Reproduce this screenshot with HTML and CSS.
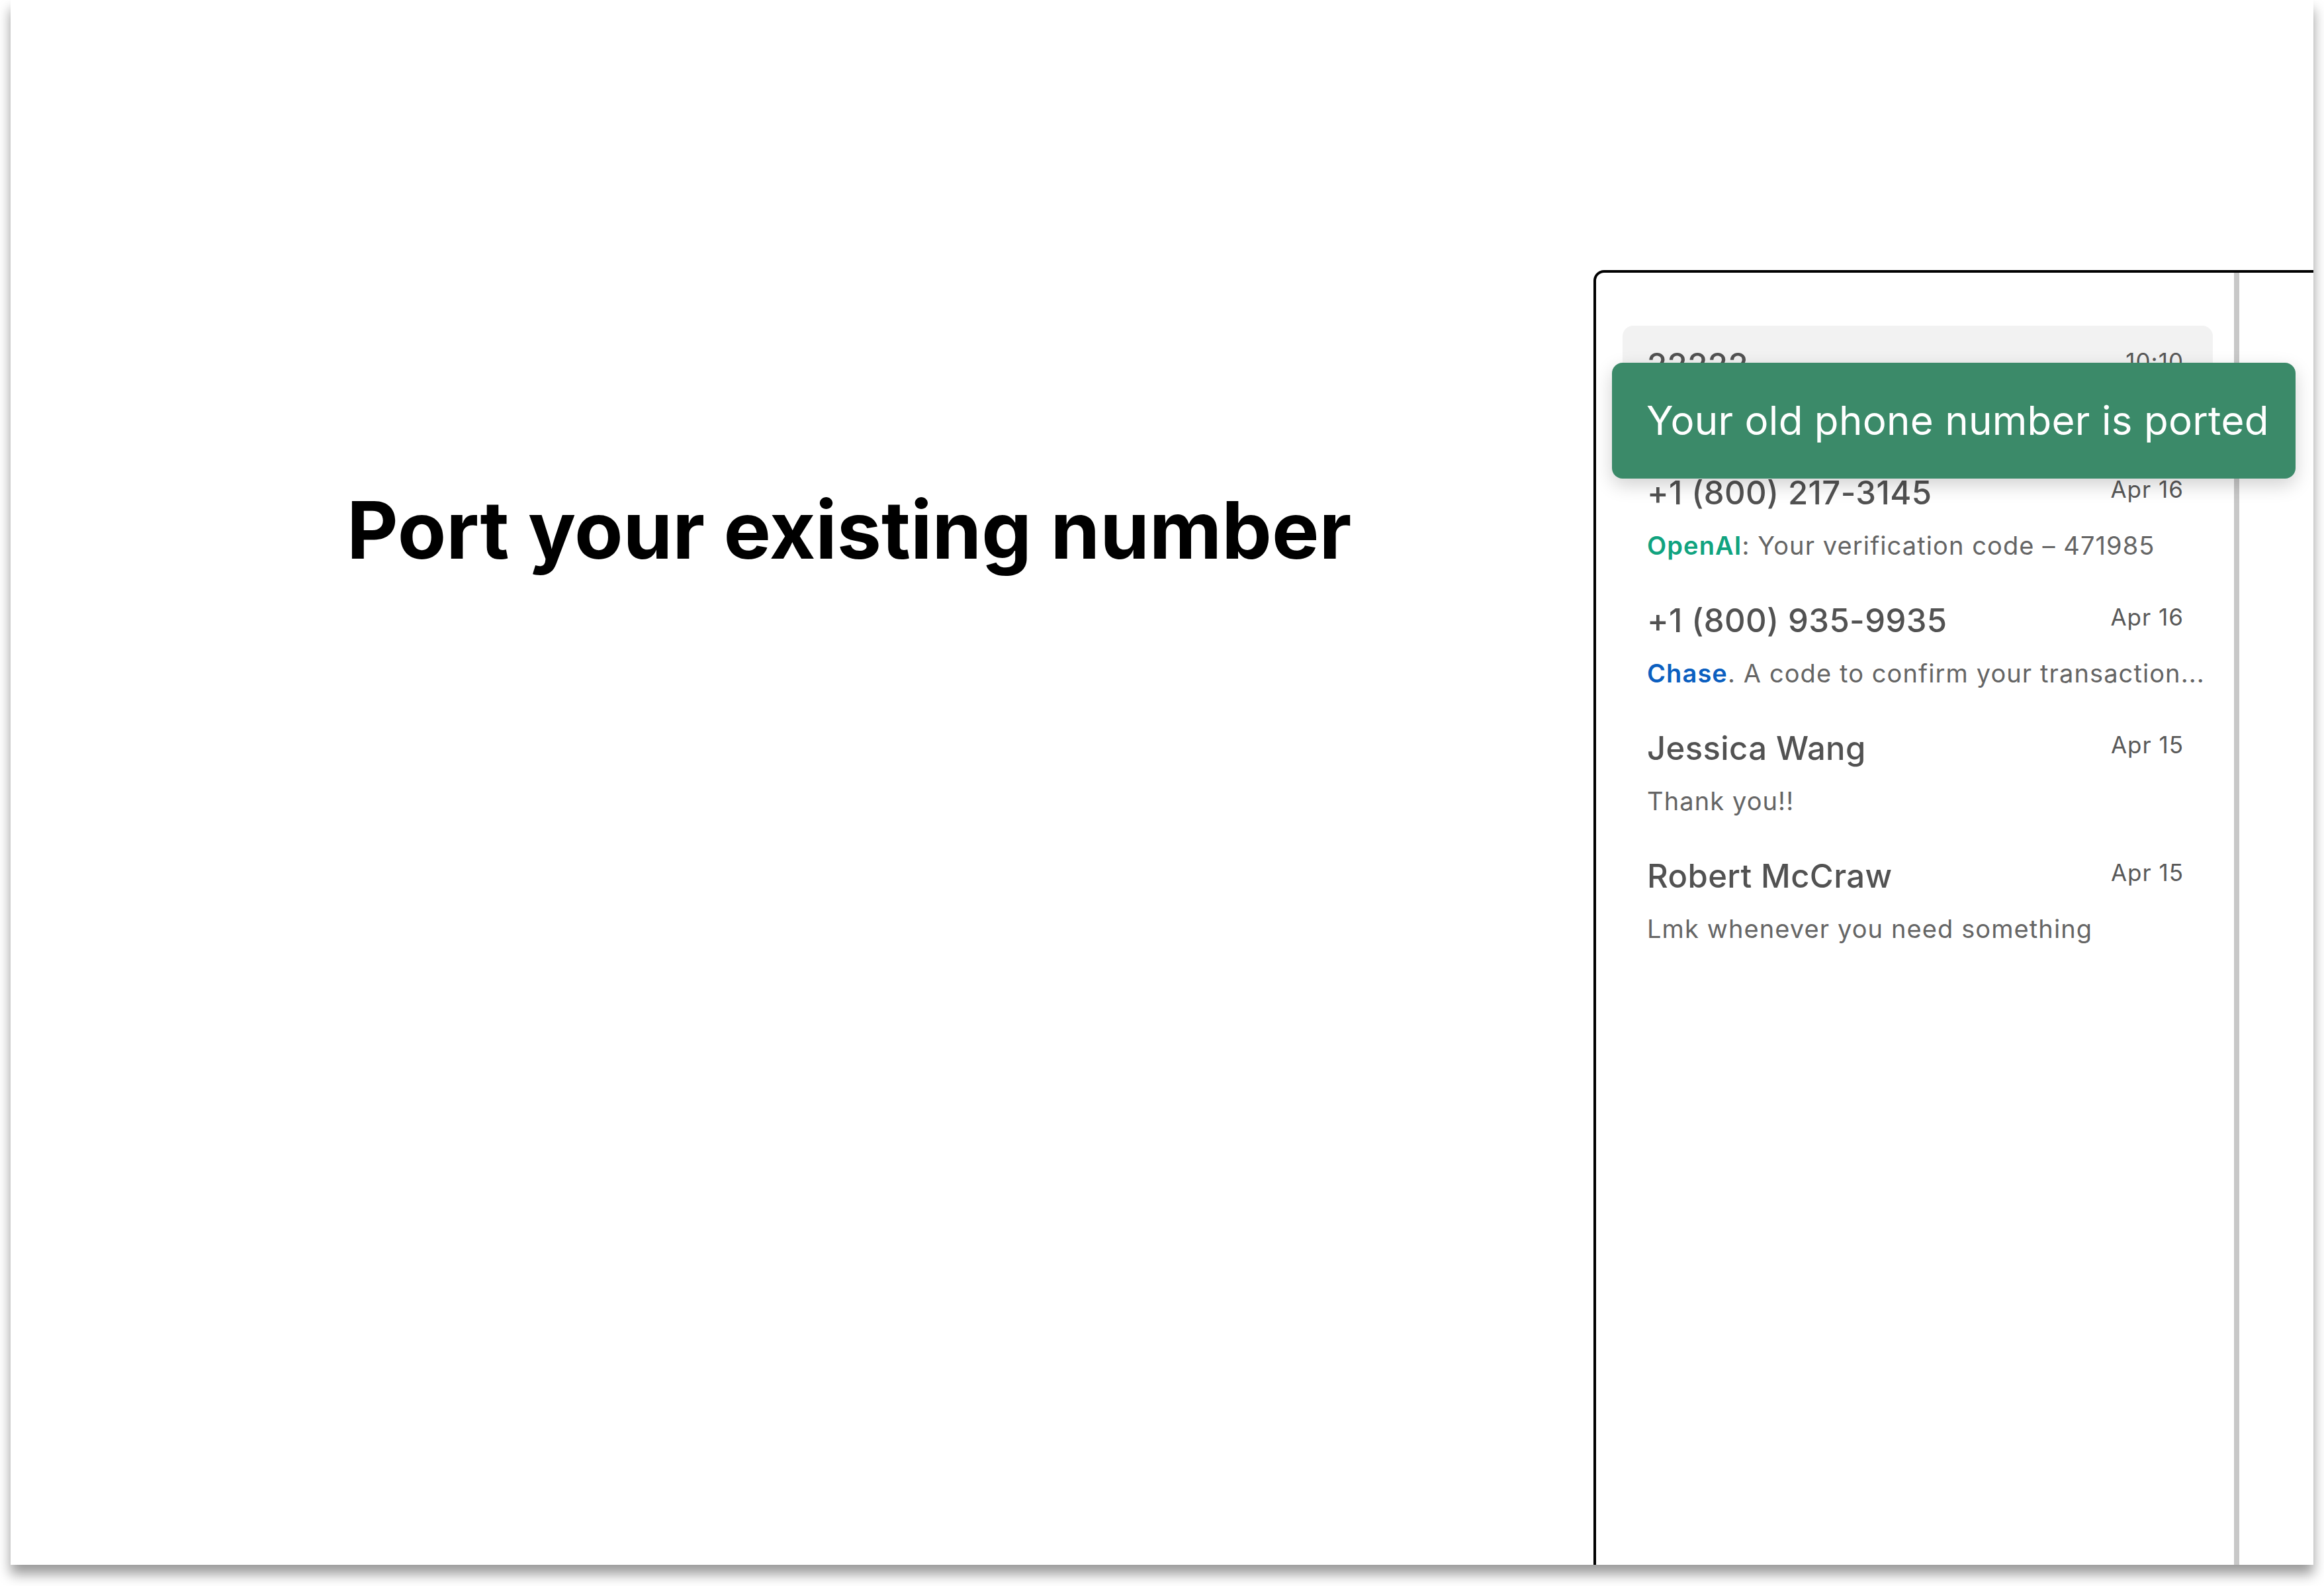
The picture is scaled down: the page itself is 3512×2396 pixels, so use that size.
FILE: index.html
```html
<!DOCTYPE html>
<html lang="en">
<head>
    <meta charset="UTF-8">
    <meta name="viewport" content="width=device-width, initial-scale=1.0">
    <title>Port your existing number</title>
    <link rel="stylesheet" href="styles.css">
</head>
<body>
    <div class="frame">
        <div class="intro">
            <h1>Port your existing number</h1>
        </div>
        <div class="phone">
            <div class="list">
                <div class="thread active">
                    <div class="thread-head">
                        <span class="name">22222</span>
                        <span class="date">10:10</span>
                    </div>
                    <div class="preview">Your number is being ported</div>
                </div>
                <div class="thread">
                    <div class="thread-head">
                        <span class="name">+1 (800) 217-3145</span>
                        <span class="date">Apr 16</span>
                    </div>
                    <div class="preview"><span class="sender openai">OpenAI</span>: Your verification code – 471985</div>
                </div>
                <div class="thread">
                    <div class="thread-head">
                        <span class="name">+1 (800) 935-9935</span>
                        <span class="date">Apr 16</span>
                    </div>
                    <div class="preview"><span class="sender chase">Chase</span>. A code to confirm your transaction...</div>
                </div>
                <div class="thread">
                    <div class="thread-head">
                        <span class="name">Jessica Wang</span>
                        <span class="date">Apr 15</span>
                    </div>
                    <div class="preview">Thank you!!</div>
                </div>
                <div class="thread">
                    <div class="thread-head">
                        <span class="name">Robert McCraw</span>
                        <span class="date">Apr 15</span>
                    </div>
                    <div class="preview">Lmk whenever you need something</div>
                </div>
            </div>
            <div class="chat"></div>
            <div class="toast">Your old phone number is ported</div>
        </div>
    </div>
</body>
</html>
```

FILE: styles.css
```css
body {
    margin: 0;
    min-height: 2396px;
    background-color: #fff;
    font-family: Inter, "Noto Sans", sans-serif;
}
.frame {
    margin: 0 16px;
    height: 2364px;
    background-color: #fff;
    box-shadow: 0 14px 18px rgba(0, 0, 0, 0.4);
    overflow: hidden;
    display: flex;
}
.intro {
    flex: 0 0 2392px;
    box-sizing: border-box;
    padding: 729px 0 0 508px;
}
.intro h1 {
    margin: 0;
    font-size: 120px;
    line-height: 144px;
    font-weight: 700;
    color: #000;
}
.phone {
    position: relative;
    flex: 0 0 1400px;
    margin-top: 408px;
    border: 4px solid #000;
    border-bottom: none;
    border-radius: 16px 16px 0 0;
    display: flex;
}
.list {
    width: 892px;
    padding: 80px 32px 0 40px;
    border-right: 8px solid #c8c8c8;
}
.chat {
    flex: 1;
}
.thread {
    padding: 31px 44px 32px 37px;
    border-radius: 16px;
}
.thread.active {
    background-color: #f2f2f2;
}
.thread-head {
    display: flex;
    justify-content: space-between;
    align-items: flex-start;
}
.name {
    font-size: 49px;
    line-height: 58px;
    font-weight: 500;
    letter-spacing: 0.4px;
    color: #525252;
}
.date {
    margin-top: 3px;
    font-size: 35px;
    line-height: 40px;
    letter-spacing: 1px;
    color: #595959;
}
.preview {
    margin-top: 28px;
    font-size: 38px;
    line-height: 44px;
    letter-spacing: 1.1px;
    color: #656565;
    white-space: nowrap;
}
.sender {
    font-weight: 600;
}
.sender.openai {
    color: #10a37f;
}
.sender.chase {
    color: #0b5fc0;
}
.toast {
    position: absolute;
    top: 136px;
    left: 24px;
    height: 175px;
    padding: 0 40px 0 52px;
    line-height: 175px;
    font-size: 60px;
    letter-spacing: 0.3px;
    color: #fff;
    background-color: #3b8a69;
    border-radius: 16px;
    box-shadow: 0 10px 28px rgba(0, 0, 0, 0.18);
    white-space: nowrap;
}
```
